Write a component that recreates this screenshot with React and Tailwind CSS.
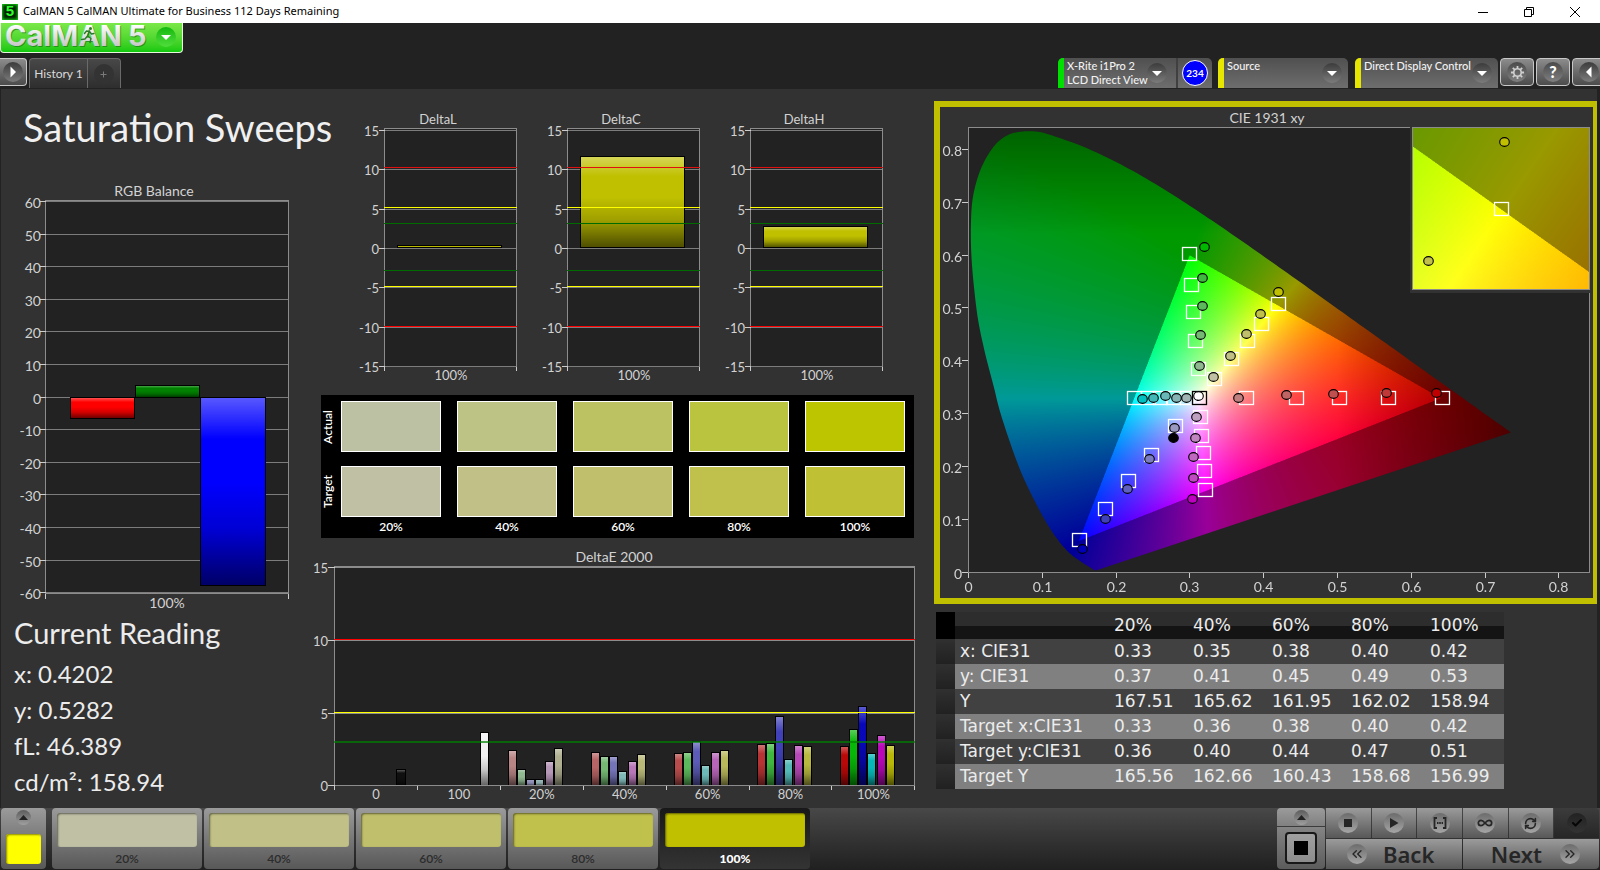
import { useEffect, useRef } from "react";
import { Settings, RefreshCw, Check, ChevronsLeft, ChevronsRight, Infinity as InfinityIcon } from "lucide-react";

const LATO = "Lato, Carlito, sans-serif";

/* ---------- shared chart helpers ---------- */

function BarGradient({ id, color }) {
  return (
    <linearGradient id={id} x1="0" y1="0" x2="0" y2="1">
      <stop offset="0" stopColor={mix(color, 255, 0.35)} />
      <stop offset="0.22" stopColor={color} />
      <stop offset="0.45" stopColor={color} />
      <stop offset="0.7" stopColor={mix(color, 0, 0.17)} />
      <stop offset="1" stopColor={mix(color, 0, 0.6)} />
    </linearGradient>
  );
}

function mix(hex, to, t) {
  const n = parseInt(hex.slice(1), 16);
  const c = [n >> 16, (n >> 8) & 255, n & 255].map((v) => Math.round(v + (to - v) * t));
  return `rgb(${c.join(",")})`;
}

function Bar({ id, x, y, w, h, color }) {
  return (
    <>
      <defs>
        <BarGradient id={id} color={color} />
      </defs>
      <rect x={x + 0.5} y={y + 0.5} width={w - 1} height={Math.max(h - 1, 1)} fill={`url(#${id})`} stroke="#000" />
    </>
  );
}

function Label({ x, y, anchor = "end", size = 13, children }) {
  return (
    <text x={x} y={y} textAnchor={anchor} fontSize={size} fontFamily={LATO} fill="#d2d2d2">
      {children}
    </text>
  );
}

/* ---------- RGB balance ---------- */

function RgbBalance() {
  const values = [60, 50, 40, 30, 20, 10, 0, -10, -20, -30, -40, -50, -60];
  return (
    <svg viewBox="1 0 307 430" className="block w-full" role="img" aria-label="RGB Balance">
      <Label x={154} y={16} anchor="middle" size={14}>RGB Balance</Label>
      <rect x="45.5" y="20.5" width="243" height="393" fill="#222" stroke="#8c8c8c" />
      {values.map((v, i) => {
        const y = Math.round(22 + i * 32.6) - 0.5;
        return (
          <g key={v}>
            <path d={`M46 ${y}H288`} stroke="#7c7c7c" />
            <path d={`M40 ${y}H46`} stroke="#ccc" />
            <Label x={41} y={y + 6} size={14}>{v}</Label>
          </g>
        );
      })}
      <path d="M45.5 414v5M288.5 414v5" stroke="#ccc" />
      <Bar id="rgb-r" x={70} y={217} w={65} h={22} color="#ff0000" />
      <Bar id="rgb-g" x={135} y={205} w={65} h={13} color="#008200" />
      <Bar id="rgb-b" x={200} y={217} w={66} h={189} color="#0000ff" />
      <Label x={167} y={428} anchor="middle" size={14}>100%</Label>
    </svg>
  );
}

/* ---------- Delta L / C / H ---------- */

function DeltaChart({ name, top }) {
  const limits = [
    [59.5, "#e01010"], [99.5, "#ffff00"], [115.5, "#006c00"],
    [162.5, "#006c00"], [178.5, "#ffff00"], [218.5, "#ff0000"],
  ];
  return (
    <svg viewBox="0 0 183 280" className="block w-full" role="img" aria-label={name}>
      <Label x={83} y={16} anchor="middle">{name}</Label>
      <rect x="29.5" y="20.5" width="132" height="238" fill="#222" stroke="#8c8c8c" />
      {[15, 10, 5, 0, -5, -10, -15].map((v, i) => {
        const y = Math.round(22 + i * 39.3) + 0.5;
        return (
          <g key={v}>
            <path d={`M30 ${y}H161`} stroke="#7c7c7c" />
            <path d={`M24 ${y}H30`} stroke="#ccc" />
            <Label x={24} y={y + 5}>{v}</Label>
          </g>
        );
      })}
      <path d="M29.5 259v4M161.5 259v4" stroke="#ccc" />
      <Bar id={`d-${name}`} x={42} y={top} w={105} h={140 - top} color="#c0c000" />
      {limits.map(([y, c]) => (
        <path key={y} d={`M29 ${y}H162`} stroke={c} />
      ))}
      <Label x={96} y={272} anchor="middle">100%</Label>
    </svg>
  );
}

/* ---------- Swatches ---------- */

const LEVELS = ["20%", "40%", "60%", "80%", "100%"];
const ACTUAL = ["bg-[#bcc1a4]", "bg-[#bcc384]", "bg-[#bcc262]", "bg-[#bac43e]", "bg-[#bcc500]"];
const TARGET = ["bg-[#c0c0a5]", "bg-[#c0c087]", "bg-[#c0c06c]", "bg-[#c0c04d]", "bg-[#c0c035]"];

function SwatchRow({ label, colors }) {
  return (
    <div className="grid grid-cols-[16px_1fr] items-center gap-1">
      <span className="flex justify-center text-[12px] leading-[14px] font-semibold [writing-mode:vertical-rl] rotate-180">
        {label}
      </span>
      <div className="grid grid-cols-5 gap-4">
        {colors.map((c) => (
          <div key={c} className={`h-[51px] border border-white ${c}`} />
        ))}
      </div>
    </div>
  );
}

function Swatches() {
  return (
    <section className="mt-[7px] mr-4 ml-[13px] bg-black pt-[6px] pr-[9px] pb-px text-white">
      <SwatchRow label="Actual" colors={ACTUAL} />
      <div className="h-[14px]" />
      <SwatchRow label="Target" colors={TARGET} />
      <div className="grid grid-cols-5 gap-4 pl-5 text-center text-[12px] leading-[20px] font-semibold">
        {LEVELS.map((l) => (
          <span key={l}>{l}</span>
        ))}
      </div>
    </section>
  );
}

/* ---------- DeltaE 2000 ---------- */

const DELTA_E = [
  { x: 200, tops: [205, 224, 234, 234, 216, 203], colors: ["#b88484", "#90b890", "#9090b8", "#90b0b0", "#b898b8", "#b0b090"] },
  { x: 283, tops: [207, 211, 211, 226, 216, 209], colors: ["#b86464", "#74b874", "#7474b8", "#80b8b8", "#b878b8", "#b8b878"] },
  { x: 366, tops: [208, 207, 196, 220, 207, 205], colors: ["#b84c4c", "#5cb85c", "#5c5cb8", "#6cb8b8", "#b864b8", "#b8b85c"] },
  { x: 449, tops: [199, 198, 171, 214, 200, 201], colors: ["#b83434", "#40b840", "#4040b8", "#54b8b8", "#b848b8", "#b8b840"] },
  { x: 532, tops: [201, 184, 161, 208, 190, 200], colors: ["#b80808", "#08b808", "#0808b8", "#08b8b8", "#b808b8", "#b8b808"] },
];

function DeltaE() {
  return (
    <svg viewBox="0 0 622 263" className="mt-[7px] block w-full" role="img" aria-label="DeltaE 2000">
      <Label x={306} y={17} anchor="middle" size={14}>DeltaE 2000</Label>
      <rect x="26.5" y="21.5" width="580" height="219" fill="#222" stroke="#8c8c8c" />
      {[15, 10, 5, 0].map((v, i) => {
        const y = 22.5 + i * 73 - (i === 3 ? 1 : 0);
        return (
          <g key={v}>
            <path d={`M27 ${y}H607`} stroke="#8c8c8c" />
            <path d={`M20 ${y}H27`} stroke="#ccc" />
            <Label x={20} y={y + 5}>{v}</Label>
          </g>
        );
      })}
      {[0, 1, 2, 3, 4, 5, 6, 7].map((i) => (
        <path key={i} d={`M${26.5 + Math.round(i * 82.9)} 241v4`} stroke="#ccc" />
      ))}
      <Bar id="e-k" x={88} y={224} w={10} h={17} color="#101010" />
      <Bar id="e-w" x={172} y={187} w={9} h={54} color="#f0f0f0" />
      {DELTA_E.map((g) =>
        g.tops.map((t, i) => (
          <Bar key={`${g.x}-${i}`} id={`e-${g.x}-${i}`} x={g.x + Math.round(i * 9.15)} y={t} w={9} h={241 - t} color={g.colors[i]} />
        ))
      )}
      <path d="M27 240.500H607" stroke="#8c8c8c" />
      <path d="M26 94.500H607" stroke="#ff0000" />
      <path d="M26 167.500H607" stroke="#ffff00" />
      <path d="M26 197H607" stroke="#008000" strokeOpacity="0.7" strokeWidth="2" />
      {["0", "100", ...LEVELS].map((l, i) => (
        <Label key={l} x={68 + i * 82.9} y={254} anchor="middle">{l}</Label>
      ))}
    </svg>
  );
}

/* ---------- CIE 1931 diagram ---------- */

const LOCUS = [
  [0.1741, 0.005], [0.1714, 0.0051], [0.1689, 0.0069], [0.1644, 0.0109], [0.1566, 0.0177], [0.144, 0.0297],
  [0.1355, 0.0399], [0.1241, 0.0578], [0.1096, 0.0868], [0.0913, 0.1327], [0.0687, 0.2007], [0.0454, 0.295],
  [0.0346, 0.3532], [0.0235, 0.4127], [0.0139, 0.4759], [0.0082, 0.5384], [0.0046, 0.5995], [0.0039, 0.6548],
  [0.0062, 0.706], [0.0139, 0.7502], [0.0247, 0.7841], [0.0389, 0.812], [0.056, 0.8285], [0.0743, 0.8338],
  [0.0943, 0.8335], [0.1142, 0.8262], [0.1547, 0.8059], [0.1929, 0.7816], [0.2296, 0.7543], [0.2658, 0.7243],
  [0.3016, 0.6923], [0.3373, 0.6589], [0.3731, 0.6245], [0.4087, 0.5896], [0.4441, 0.5547], [0.4788, 0.5202],
  [0.5125, 0.4866], [0.5448, 0.4544], [0.5752, 0.4242], [0.6029, 0.3965], [0.627, 0.3725], [0.6482, 0.3514],
  [0.6658, 0.334], [0.6915, 0.3083], [0.7079, 0.292], [0.7347, 0.2653],
];

/* Smooth closed outline through the locus points (Catmull-Rom), straight along the purple line. */
function locusPoints() {
  const out = [];
  const n = LOCUS.length;
  for (let i = 0; i < n - 1; i++) {
    const p0 = LOCUS[Math.max(i - 1, 0)];
    const p1 = LOCUS[i];
    const p2 = LOCUS[i + 1];
    const p3 = LOCUS[Math.min(i + 2, n - 1)];
    for (let s = 0; s < 6; s++) {
      const t = s / 6;
      out.push(
        [0, 1].map(
          (k) =>
            0.5 *
            (2 * p1[k] +
              (p2[k] - p0[k]) * t +
              (2 * p0[k] - 5 * p1[k] + 4 * p2[k] - p3[k]) * t * t +
              (3 * p1[k] - p0[k] - 3 * p2[k] + p3[k]) * t * t * t)
        )
      );
    }
  }
  out.push(LOCUS[n - 1]);
  return out;
}

function chroma(x, y) {
  const X = x / y;
  const Z = (1 - x - y) / y;
  const rgb = [
    3.2406 * X - 1.5372 - 0.4986 * Z,
    -0.9689 * X + 1.8758 + 0.0415 * Z,
    0.0557 * X - 0.204 + 1.057 * Z,
  ];
  const inside = rgb.every((v) => v >= 0);
  const max = Math.max(...rgb);
  let f = inside ? 255 : 153;
  if (x > 0.5) f *= 1 - 2.1 * (x - 0.5);
  if (y > 0.64) f *= 1 - 1.8 * (y - 0.64);
  return rgb.map((v) => Math.pow(Math.max(v, 0) / max, 0.9) * f);
}

/* Paints chromaticity colours; view maps canvas pixels to x/y. */
function ChromaCanvas({ width, height, view, clip }) {
  const ref = useRef(null);
  useEffect(() => {
    const ctx = ref.current.getContext("2d");
    const img = ctx.createImageData(width, height);
    const sub = [0.25, 0.75];
    for (let j = 0; j < height; j++) {
      for (let i = 0; i < width; i++) {
        let r = 0, g = 0, b = 0;
        for (const dy of sub) {
          for (const dx of sub) {
            const x = view.x0 + (i + dx) / view.sx;
            const y = view.y0 - (j + dy) / view.sy;
            const c = chroma(x, Math.max(y, 0.001));
            r += c[0]; g += c[1]; b += c[2];
          }
        }
        const o = (j * width + i) * 4;
        img.data[o] = r / 4;
        img.data[o + 1] = g / 4;
        img.data[o + 2] = b / 4;
        img.data[o + 3] = 255;
      }
    }
    ctx.putImageData(img, 0, 0);
    if (clip) {
      ctx.globalCompositeOperation = "destination-in";
      ctx.beginPath();
      locusPoints().forEach(([x, y]) => ctx.lineTo((x - view.x0) * view.sx, (view.y0 - y) * view.sy));
      ctx.closePath();
      ctx.fill();
    }
  }, [width, height, view, clip]);
  return <canvas ref={ref} width={width} height={height} className="block h-full w-full" />;
}

const MAIN_VIEW = { x0: 0, y0: 0.8405, sx: 738.8, sy: 529.2 };
const INSET_VIEW = { x0: 0.3923, y0: 0.533, sx: 3300, sy: 2960 };

const TARGETS = [
  [249, 147], [251, 178], [253, 205], [255, 234], [258, 262],
  [338, 197], [321, 217], [307, 234], [291, 252], [274, 272],
  [194, 291], [208, 291], [220, 291], [233, 291], [247, 291],
  [260, 310], [261, 329], [263, 346], [264, 364], [265, 383],
  [235, 319], [211, 348], [188, 374], [165, 402], [139, 433],
  [306, 291], [356, 291], [399, 291], [448, 291], [502, 291],
];

const READINGS = [
  [264, 140, "#00b800"], [262, 171, "#40b840"], [262, 199, "#5cb85c"], [260, 228, "#74b874"], [259, 259, "#90b890"],
  [338, 185, "#c0c000"], [320, 207, "#c0c04a"], [306, 227, "#c0c06a"], [290, 249, "#c0c086"], [273, 270, "#c0c0a4"],
  [202, 292, "#00c0c0"], [213, 291, "#40b8b8"], [225, 289, "#68b8b8"], [236, 291, "#84b4b4"], [246, 291, "#a0b4b4"],
  [256, 310, "#c0a0c0"], [255, 331, "#c084c0"], [253, 350, "#c068c0"], [253, 371, "#c048c0"], [252, 392, "#c000c0"],
  [234, 321, "#9898c0"], [209, 352, "#7c7cc0"], [187, 382, "#6060c0"], [165, 412, "#4040b8"], [142, 442, "#0000b8"],
  [298, 291, "#c08080"], [346, 288, "#c06464"], [393, 287, "#c05050"], [446, 286, "#c03838"], [496, 286, "#c00000"],
  [233, 331, "#000000"],
];

function Target({ x, y, color = "#fff" }) {
  return <rect x={x - 6.5} y={y - 6.5} width="14" height="13" fill="none" stroke={color} strokeWidth="1.3" />;
}

function Reading({ x, y, color }) {
  return <ellipse cx={x + 0.5} cy={y} rx="4.8" ry="4.4" fill={color} stroke="#000" strokeWidth="1.1" />;
}

function CieChart() {
  return (
    <section className="mt-3 ml-1 border-6 border-r-4 border-[#c0c000]">
      <svg viewBox="0 0 653 491" className="block w-full" role="img" aria-label="CIE 1931 xy">
        <Label x={327} y={16} anchor="middle" size={14}>CIE 1931 xy</Label>
        <rect x="28.500" y="20.500" width="621" height="445" fill="#222" stroke="#8c8c8c" />
        <foreignObject x="28" y="21" width="560" height="445">
          <ChromaCanvas width={560} height={445} view={MAIN_VIEW} clip />
        </foreignObject>
        <path d="M28.500 20V466" stroke="#8c8c8c" />
        {[0, 1, 2, 3, 4, 5, 6, 7, 8].map((i) => {
          const x = 28.5 + Math.round(i * 73.8);
          const y = 465.5 - Math.round(i * 52.9);
          const text = i === 0 ? "0" : `0.${i}`;
          return (
            <g key={i}>
              <path d={`M${x} 466v5M22 ${y}h6`} stroke="#ccc" />
              <Label x={22} y={y + 6} size={14}>{text}</Label>
              <Label x={x} y={485} anchor="middle" size={14}>{text}</Label>
            </g>
          );
        })}
        {TARGETS.map(([x, y]) => (
          <Target key={`${x}-${y}`} x={x} y={y} />
        ))}
        <Target x={259} y={291} color="#000" />
        {READINGS.map(([x, y, c]) => (
          <Reading key={`${x}-${y}`} x={x} y={y} color={c} />
        ))}
        <Reading x={258} y={289} color="#fff" />

        <rect x="470" y="18" width="183" height="168" fill="#323232" />
        <foreignObject x="473" y="21" width="177" height="162">
          <ChromaCanvas width={177} height={162} view={INSET_VIEW} />
        </foreignObject>
        <rect x="472.500" y="20.500" width="177" height="162" fill="none" stroke="#8c8c8c" />
        <Target x={561} y={102} />
        <Reading x={564} y={35} color="#c0c000" />
        <Reading x={488} y={154} color="#c0c04a" />
      </svg>
    </section>
  );
}

/* ---------- Results table ---------- */

const ROWS = [
  ["x: CIE31", "0.33", "0.35", "0.38", "0.40", "0.42"],
  ["y: CIE31", "0.37", "0.41", "0.45", "0.49", "0.53"],
  ["Y", "167.51", "165.62", "161.95", "162.02", "158.94"],
  ["Target x:CIE31", "0.33", "0.36", "0.38", "0.40", "0.42"],
  ["Target y:CIE31", "0.36", "0.40", "0.44", "0.47", "0.51"],
  ["Target Y", "165.56", "162.66", "160.43", "158.68", "156.99"],
];

function Results() {
  return (
    <table className="mt-2 ml-[6px] w-[568px] table-fixed border-collapse text-left font-['DejaVu_Sans',sans-serif] text-[17px] leading-[25px] text-[#ececec]">
      <colgroup>
        <col className="w-[19px]" />
        <col className="w-[154px]" />
        <col /><col /><col /><col /><col />
      </colgroup>
      <thead>
        <tr className="h-[27px] bg-linear-to-b from-[#2d2d2d] from-50% to-[#141414] to-50%">
          <td className="bg-black p-0" />
          <td className="p-0" />
          {LEVELS.map((l) => (
            <th key={l} scope="col" className="p-0 pl-[5px] font-normal">{l}</th>
          ))}
        </tr>
      </thead>
      <tbody>
        {ROWS.map(([label, ...vals], i) => (
          <tr key={label} className={i % 2 ? "bg-[#808080]" : "bg-[#414141]"}>
            <td className="bg-linear-to-b from-[#303030] to-[#212121] p-0" />
            <th scope="row" className="p-0 pl-[5px] font-normal whitespace-nowrap">{label}</th>
            {vals.map((v, k) => (
              <td key={k} className="p-0 pl-[5px]">{v}</td>
            ))}
          </tr>
        ))}
      </tbody>
    </table>
  );
}

/* ---------- Header ---------- */

function RoundArrow({ dir = "down", tone = "from-[#3c3c3c] to-[#7c7c7c]", className = "" }) {
  const d = { down: "M5 8h10l-5 5z", right: "M7.500 4.500v11l5.500-5.500z", left: "M12.500 4.500v11l-5.500-5.500z" }[dir];
  return (
    <span className={`flex size-5 shrink-0 rounded-full bg-linear-to-b ${tone} ${className}`}>
      <svg viewBox="0 0 20 20" className="size-5"><path d={d} fill="#fff" /></svg>
    </span>
  );
}

function TitleBar() {
  return (
    <div className="flex h-[23px] items-center bg-white text-black">
      <span className="ml-[2px] flex size-4 items-center justify-center bg-[#032003] font-['Liberation_Sans',sans-serif] text-[15px] font-bold text-[#2dff2d] shadow-[inset_0_0_3px_1px_#10d010]">5</span>
      <h1 className="ml-[5px] font-['Noto_Sans',sans-serif] text-[11px]">CalMAN 5 CalMAN Ultimate for Business 112 Days Remaining</h1>
      <div className="mr-[2px] ml-auto flex">
        <button aria-label="Minimize" className="flex w-[46px] justify-center">
          <svg width="12" height="12" fill="none" stroke="#000"><path d="M1 6.500h10" /></svg>
        </button>
        <button aria-label="Restore" className="flex w-[46px] justify-center">
          <svg width="12" height="12" fill="none" stroke="#000"><path d="M1.500 3.500h7v7h-7zM3.500 3V1.500h7v7H9" /></svg>
        </button>
        <button aria-label="Close" className="flex w-[46px] justify-center">
          <svg width="12" height="12" fill="none" stroke="#000"><path d="M1 1l10 10M11 1L1 11" /></svg>
        </button>
      </div>
    </div>
  );
}

function Logo() {
  return (
    <button aria-label="CalMAN 5 menu" className="flex h-[30px] w-[183px] items-start rounded-b-[4px] border-x border-b border-[#e6f8dc] bg-linear-to-b from-[#7be84a] to-[#0cc90c]">
      <svg viewBox="0 0 150 30" className="h-[30px] w-[150px] overflow-visible">
        <defs>
          <linearGradient id="silver" x1="0" y1="0" x2="0" y2="1">
            <stop offset="0.2" stopColor="#ffffff" />
            <stop offset="1" stopColor="#b4b4b4" />
          </linearGradient>
        </defs>
        <g fontFamily="Inter, sans-serif" fontWeight="700" fontSize="29">
          <text x="5" y="24" fill="#1a7a1a" fillOpacity="0.7" aria-hidden="true">CalMAN</text>
          <text x="128" y="24" fill="#1a7a1a" fillOpacity="0.7" aria-hidden="true">5</text>
          <text x="4" y="23" fill="url(#silver)">CalMAN</text>
          <text x="127" y="23" fill="url(#silver)">5</text>
        </g>
        <g fill="none" stroke="#2a7a2a" strokeWidth="1.400" strokeLinecap="round" strokeLinejoin="round">
          <path d="M88.500 8l-2 5 3.500 2.500-1 4M86.500 13l-2.500 3-3.500.5M83.500 10.500l2-2.500 3 .5 2 2.500 2.500-.5" />
        </g>
        <circle cx="89.500" cy="5.500" r="1.500" fill="#2a7a2a" />
      </svg>
      <RoundArrow className="mt-1 ml-[5px]" tone="from-[#0cb80c] to-[#4ede3a]" />
    </button>
  );
}

function Device({ label, bar, width, pad = "pr-[6px]", children, extra }) {
  return (
    <div className={`flex h-[30px] overflow-hidden rounded-t-[5px] bg-linear-to-b from-[#505050] to-[#6e6e6e] ${width}`}>
      <span className={`w-[6px] shrink-0 ${bar}`} />
      <button aria-label={label} className={`flex min-w-0 flex-1 items-start justify-between pl-[3px] text-left text-[11px] leading-[14px] font-medium whitespace-nowrap text-[#f2f2f2] ${pad}`}>
        <span className="min-w-0 flex-1 pt-px">{children}</span>
        <RoundArrow className="mt-[5px]" />
      </button>
      {extra}
    </div>
  );
}

function SquareButton({ label, children }) {
  return (
    <button aria-label={label} className="flex h-[28px] w-[34px] shrink-0 items-center justify-center rounded-[4px] border border-[#c8c8c8] bg-linear-to-b from-[#8c8c8c] to-[#4c4c4c]">
      {children}
    </button>
  );
}

function Header() {
  return (
    <header className="bg-[#222]">
      <Logo />
      <div className="mt-[5px] flex h-[31px] items-start overflow-hidden">
        <button aria-label="Expand" className="flex h-[28px] w-[27px] items-center justify-center rounded-r-[4px] border border-l-0 border-[#c8c8c8] bg-linear-to-b from-[#8c8c8c] to-[#4c4c4c]">
          <RoundArrow dir="right" />
        </button>
        <div className="ml-[2px] flex h-[30px] overflow-hidden rounded-t-[4px] border border-b-0 border-[#6a6a6a] bg-linear-to-b from-[#484848] to-[#2e2e2e]">
          <button className="w-[58px] border-r border-[#6a6a6a] text-[12px] text-[#dadada]">History 1</button>
          <button aria-label="Add history" className="flex w-[32px] items-center justify-center">
            <span className="flex size-5 items-center justify-center rounded-full bg-[#333]">
              <svg viewBox="0 0 20 20" className="size-5"><path d="M9.500 7.500v6M6.500 10.500h6" stroke="#7a7a7a" /></svg>
            </span>
          </button>
        </div>
        <div className="ml-auto flex items-start">
          <Device
            label="X-Rite i1Pro 2 meter"
            bar="bg-[#00e000]"
            width="w-[154px]"
            pad="pr-[9px]"
            extra={
              <span className="flex w-9 shrink-0 items-center justify-center border-l-2 border-[#404040]">
                <span className="flex size-[26px] items-center justify-center rounded-full border border-white bg-[#0000ff] text-[10px] font-bold text-white">234</span>
              </span>
            }
          >
            X-Rite i1Pro 2<br />LCD Direct View
          </Device>
          <div className="w-[6px]" />
          <Device label="Source" bar="bg-[#e6e600]" width="w-[130px]">Source</Device>
          <div className="w-[7px]" />
          <Device label="Direct Display Control" bar="bg-[#e6e600]" width="w-[143px]">
            Direct Display Control
          </Device>
          <div className="-mr-[6px] ml-[2px] flex gap-[2px]">
            <SquareButton label="Settings">
              <span className="flex size-5 items-center justify-center rounded-full bg-linear-to-b from-[#4a4a4a] to-[#808080]">
                <svg viewBox="0 0 16 16" className="size-[15px]" fill="none" stroke="#cfcfcf">
                  <circle cx="8" cy="8" r="4" strokeWidth="1.800" />
                  <path d="M8 4V1M8 15v-3M4 8H1M15 8h-3M5.200 5.200L3 3M13 13l-2.200-2.200M5.200 10.800L3 13M13 3l-2.200 2.200" strokeWidth="1.900" />
                </svg>
              </span>
            </SquareButton>
            <SquareButton label="Help">
              <span className="flex size-5 items-center justify-center rounded-full bg-linear-to-b from-[#4a4a4a] to-[#808080] text-[16px] leading-5 font-black text-white">?</span>
            </SquareButton>
            <SquareButton label="Collapse">
              <RoundArrow dir="left" />
            </SquareButton>
          </div>
        </div>
      </div>
    </header>
  );
}

/* ---------- Footer ---------- */

const PATCHES = [
  ["20%", "bg-[#c0c0a5]"], ["40%", "bg-[#c0c087]"], ["60%", "bg-[#c0c06c]"], ["80%", "bg-[#c0c04d]"], ["100%", "bg-[#c0c000]"],
];

const METAL = "bg-linear-to-b from-[#9b9b9b] to-[#585858]";

function Dot({ children, dark }) {
  return (
    <span className={`flex size-5 shrink-0 items-center justify-center rounded-full bg-linear-to-b ${dark ? "from-[#222] to-[#333]" : "from-[#6c6c6c] to-[#a6a6a6]"}`}>
      {children}
    </span>
  );
}

function UpDot() {
  return (
    <span className="flex size-[15px] items-center justify-center rounded-full bg-linear-to-b from-[#5c5c5c] to-[#a0a0a0]">
      <svg width="9" height="5"><path d="M0 5h9L4.500 0z" fill="#222" /></svg>
    </span>
  );
}

const TOOLS = [
  ["Stop", <svg key="s" width="8" height="8"><path d="M0 0h8v8H0z" fill="#262626" /></svg>],
  ["Play", <svg key="p" width="10" height="10" className="ml-px"><path d="M1 0v10l8.500-5z" fill="#262626" /></svg>],
  ["Step range", <svg key="r" width="14" height="12" fill="none" stroke="#262626" strokeWidth="1.800"><path d="M4 1H1.500v10H4M10 1h2.500v10H10" /><path d="M4 6h1.500M6.200 6h1.600M8.600 6H10" /></svg>],
  ["Continuous", <InfinityIcon key="i" className="size-4 text-[#262626]" strokeWidth={2.6} />],
  ["Refresh", <RefreshCw key="f" className="size-[13px] text-[#262626]" strokeWidth={3} />],
];

function Footer() {
  return (
    <footer className="flex h-[62px] items-start bg-linear-to-b from-[#484848] to-[#202020] pr-px pl-px">
      <button aria-label="Current patch" className={`flex h-[61px] w-[45px] flex-col items-center justify-between rounded-[4px] pt-[2px] pb-[5px] ${METAL}`}>
        <UpDot />
        <span className="h-[30px] w-[35px] rounded-[3px] bg-[#ffff00] shadow-[inset_1px_1px_2px_#8a8a00]" />
      </button>
      <div className="ml-[6px] flex gap-[2px]">
        {PATCHES.map(([label, color], i) => (
          <button
            key={label}
            className={`flex h-[61px] w-[150px] flex-col justify-start rounded-[4px] px-[5px] pt-[5px] text-[12px] leading-[20px] ${
              i === 4 ? "bg-linear-to-b from-[#181818] to-[#343434] font-black text-white" : `font-semibold text-[#2c2c2c] ${METAL}`
            }`}
          >
            <span className={`h-9 w-full rounded-[3px] shadow-[inset_1px_1px_2px_rgba(0,0,0,0.5)] ${color}`} />
            <span className="w-full pt-[2px] text-center">{label}</span>
          </button>
        ))}
      </div>
      <div className="ml-auto flex gap-px">
        <div className="flex w-[48px] flex-col gap-px">
          <button aria-label="Show window options" className="flex h-[18px] items-center justify-center rounded-t-[4px] bg-linear-to-b from-[#9b9b9b] to-[#808080]">
            <UpDot />
          </button>
          <button aria-label="Pattern window" className="flex h-[42px] items-center justify-center rounded-b-[4px] bg-linear-to-b from-[#848484] to-[#5c5c5c]">
            <span className="flex size-8 items-center justify-center rounded-[4px] border-2 border-[#181818] bg-linear-to-b from-[#a0a0a0] to-[#8c8c8c]">
              <span className="size-[14px] bg-black" />
            </span>
          </button>
        </div>
        <div className="grid w-[273px] grid-cols-6 gap-px">
          {TOOLS.map(([name, icon]) => (
            <button key={name} aria-label={name} className={`flex h-[30px] items-center justify-center ${METAL}`}>
              <Dot>{icon}</Dot>
            </button>
          ))}
          <button aria-label="Accept" className="flex h-[30px] items-center justify-center rounded-tr-[4px] bg-linear-to-b from-[#3c3c3c] to-[#262626]">
            <Dot dark><Check className="size-3 text-[#060606]" strokeWidth={4} /></Dot>
          </button>
          <button className={`col-span-3 flex h-[30px] items-center gap-4 pl-[21px] font-['Noto_Sans',sans-serif] text-[22px] font-semibold text-[#262626] ${METAL}`}>
            <Dot><ChevronsLeft className="size-4" strokeWidth={2} /></Dot>
            Back
          </button>
          <button className={`col-span-3 flex h-[30px] items-center justify-end gap-[18px] rounded-br-[4px] pr-[19px] font-['Noto_Sans',sans-serif] text-[22px] font-semibold text-[#262626] ${METAL}`}>
            Next
            <Dot><ChevronsRight className="size-4" strokeWidth={2} /></Dot>
          </button>
        </div>
      </div>
    </footer>
  );
}

/* ---------- Page ---------- */

export default function App() {
  return (
    <div className="flex min-h-screen flex-col bg-[#222] font-[Lato,sans-serif]">
      <TitleBar />
      <Header />
      <main className="grid flex-1 grid-cols-[307fr_622fr_667fr] items-start border-r-3 border-l border-[#222] bg-[#323232]">
        <div className="min-w-0">
          <h2 className="mb-[31px] pt-4 pl-[22px] text-[38px] leading-[44px] whitespace-nowrap text-[#f0f0f0]">Saturation Sweeps</h2>
          <RgbBalance />
          <div className="pl-[13px] text-[24px] leading-[36px] text-[#ececec]">
            <h3 className="text-[29px] leading-[46px]">Current Reading</h3>
            <p>x: 0.4202</p>
            <p>y: 0.5282</p>
            <p>fL: 46.389</p>
            <p>cd/m²: 158.94</p>
          </div>
        </div>
        <div className="min-w-0">
          <div className="grid grid-cols-3 pt-[19px] pr-[26px] pl-[47px]">
            <DeltaChart name="DeltaL" top={137} />
            <DeltaChart name="DeltaC" top={48} />
            <DeltaChart name="DeltaH" top={118} />
          </div>
          <Swatches />
          <DeltaE />
        </div>
        <div className="min-w-0">
          <CieChart />
          <Results />
        </div>
      </main>
      <Footer />
    </div>
  );
}
